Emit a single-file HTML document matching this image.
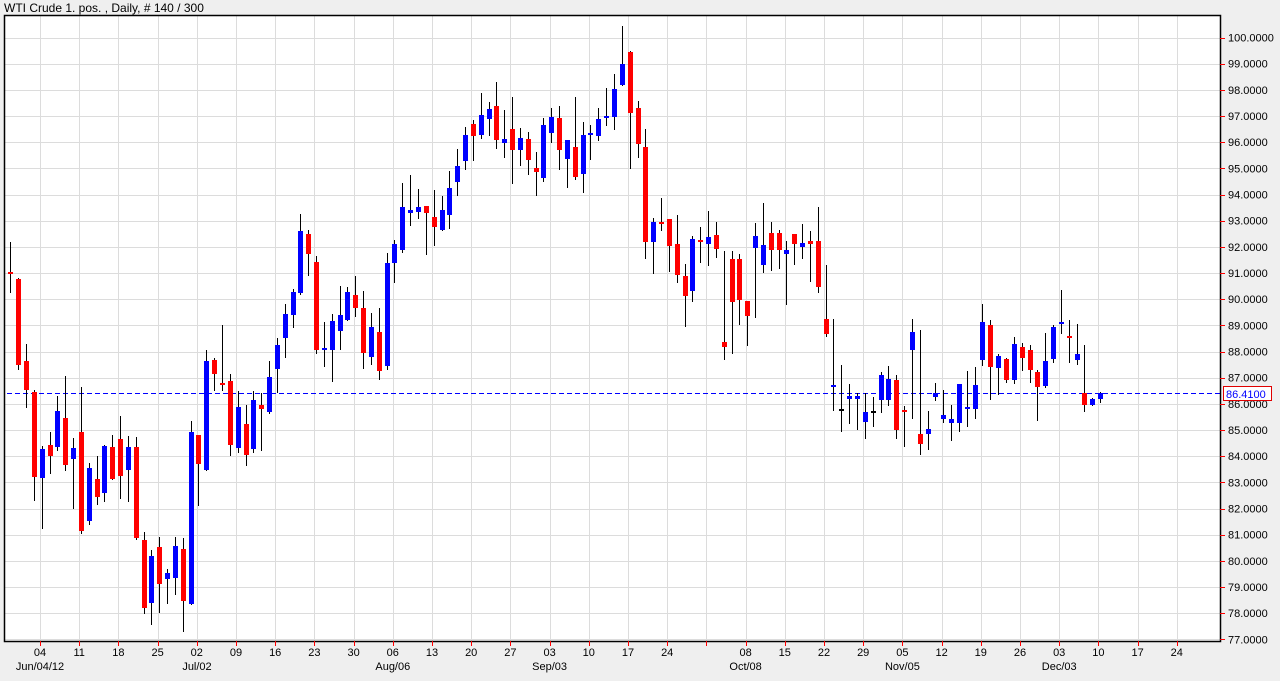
<!DOCTYPE html>
<html><head><meta charset="utf-8"><style>
html,body{margin:0;padding:0;background:#efefef;width:1280px;height:681px;overflow:hidden}
svg{display:block;font-family:"Liberation Sans",sans-serif}
</style></head><body>
<svg id="s" width="1280" height="681" xmlns="http://www.w3.org/2000/svg">
<rect x="0" y="0" width="1280" height="681" fill="#efefef"/>
<text x="4" y="12" font-size="12" fill="#000">WTI Crude 1. pos. , Daily, # 140 / 300</text>
<rect x="4.5" y="15.5" width="1216" height="626" fill="#fff" stroke="none"/>
<g id="grid" stroke="#dcdcdc" stroke-width="1"></g>
<line x1="7" y1="393.5" x2="1220" y2="393.5" stroke="#0000ff" stroke-width="1" stroke-dasharray="5,3"/>
<g id="c"></g>
<path d="M4.5 15.5 H1220.5 V641.5 H4.5 Z" fill="none" stroke="#000" stroke-width="1.5"/>
<g id="ticks" stroke="#f00" stroke-width="1"></g>
<g font-size="11" fill="#000">
<text x="1228" y="41.5">100.0000</text>
<text x="1228" y="67.7">99.0000</text>
<text x="1228" y="93.8">98.0000</text>
<text x="1228" y="120">97.0000</text>
<text x="1228" y="146.2">96.0000</text>
<text x="1228" y="172.4">95.0000</text>
<text x="1228" y="198.5">94.0000</text>
<text x="1228" y="224.7">93.0000</text>
<text x="1228" y="250.9">92.0000</text>
<text x="1228" y="277">91.0000</text>
<text x="1228" y="303.2">90.0000</text>
<text x="1228" y="329.4">89.0000</text>
<text x="1228" y="355.5">88.0000</text>
<text x="1228" y="381.7">87.0000</text>
<text x="1228" y="407.9">86.0000</text>
<text x="1228" y="434.1">85.0000</text>
<text x="1228" y="460.2">84.0000</text>
<text x="1228" y="486.4">83.0000</text>
<text x="1228" y="512.6">82.0000</text>
<text x="1228" y="538.7">81.0000</text>
<text x="1228" y="564.9">80.0000</text>
<text x="1228" y="591.1">79.0000</text>
<text x="1228" y="617.2">78.0000</text>
<text x="1228" y="643.4">77.0000</text>
</g>
<rect x="1223.5" y="386.5" width="48" height="14" fill="#fff" stroke="#e00000"/>
<text x="1226" y="398" font-size="11" fill="#0000ff">86.4100</text>
<g font-size="11" fill="#000" text-anchor="middle">
<text x="40" y="656">04</text><text x="79.2" y="656">11</text><text x="118.4" y="656">18</text><text x="157.6" y="656">25</text>
<text x="196.8" y="656">02</text><text x="236" y="656">09</text><text x="275.2" y="656">16</text><text x="314.4" y="656">23</text>
<text x="353.6" y="656">30</text><text x="392.8" y="656">06</text><text x="432" y="656">13</text><text x="471.2" y="656">20</text>
<text x="510.4" y="656">27</text><text x="549.6" y="656">03</text><text x="588.8" y="656">10</text><text x="628" y="656">17</text>
<text x="667.2" y="656">24</text><text x="745.6" y="656">08</text><text x="784.8" y="656">15</text><text x="824" y="656">22</text>
<text x="863.2" y="656">29</text><text x="902.4" y="656">05</text><text x="941.6" y="656">12</text><text x="980.8" y="656">19</text>
<text x="1020" y="656">26</text><text x="1059.2" y="656">03</text><text x="1098.4" y="656">10</text><text x="1137.6" y="656">17</text>
<text x="1176.8" y="656">24</text>
<text x="40" y="670">Jun/04/12</text><text x="197" y="670">Jul/02</text><text x="392.8" y="670">Aug/06</text>
<text x="549.6" y="670">Sep/03</text><text x="745.6" y="670">Oct/08</text><text x="902.4" y="670">Nov/05</text>
<text x="1059.2" y="670">Dec/03</text>
</g>
</svg>
<script>
var NS="http://www.w3.org/2000/svg";
function el(p,n,a){var e=document.createElementNS(NS,n);for(var k in a)e.setAttribute(k,a[k]);p.appendChild(e);return e;}
var g=document.getElementById('grid'),t=document.getElementById('ticks');
for(var k=0;k<24;k++){var y=Math.round(37.5+26.17*k)+0.5;el(g,'line',{x1:5,x2:1220,y1:y,y2:y});el(t,'line',{x1:1220,x2:1225,y1:y,y2:y});}
for(var k=0;k<30;k++){var x=Math.round(40+39.2*k)+0.5;el(g,'line',{x1:x,x2:x,y1:16,y2:641});el(t,'line',{x1:x,x2:x,y1:641,y2:646});}
var D=[
[242,272,274,293,'r'],[278,279,365,370,'r'],[344,361,390,408,'r'],[390,392,477,501,'r'],[446,449,478,529,'b'],
[432,445,456,474,'r'],[396,411,447,451,'b'],[376,418,465,471,'r'],[438,448,459,509,'b'],[387,432,531,534,'r'],
[463,468,521,525,'b'],[456,479,497,505,'r'],[445,446,493,502,'b'],[435,447,479,480,'r'],[416,439,476,499,'r'],
[436,447,470,502,'b'],[437,447,538,540,'r'],[532,540,608,614,'r'],[550,556,603,625,'b'],[537,547,584,613,'r'],
[569,573,579,604,'b'],[537,546,578,595,'b'],[538,549,601,632,'r'],[421,432,604,605,'b'],[435,435,464,506,'r'],
[350,361,470,471,'b'],[358,360,374,391,'r'],[325,383,385,391,'r'],[374,381,445,456,'r'],[391,407,448,453,'b'],
[405,424,455,466,'r'],[391,400,449,453,'b'],[393,405,409,451,'r'],[361,377,412,414,'b'],[338,345,369,393,'b'],
[304,314,338,358,'b'],[289,292,315,328,'b'],[214,231,293,295,'b'],[230,234,254,276,'r'],[256,262,350,354,'r'],
[322,348,350,367,'b'],[314,321,350,382,'b'],[286,315,331,350,'b'],[287,292,320,321,'b'],[276,295,308,317,'r'],
[291,308,353,369,'r'],[313,327,357,365,'b'],[308,332,371,380,'r'],[253,263,366,370,'b'],[240,244,263,283,'b'],
[183,207,250,253,'b'],[175,210,213,226,'b'],[189,207,212,219,'b'],[206,206,213,255,'r'],[190,217,227,246,'r'],
[196,210,230,231,'b'],[171,188,215,229,'b'],[149,166,182,196,'b'],[127,135,161,170,'b'],[120,124,136,161,'r'],
[93,115,135,139,'b'],[102,109,119,136,'b'],[82,106,140,149,'r'],[110,139,143,158,'b'],[97,129,150,184,'r'],
[128,138,150,166,'b'],[132,139,160,175,'r'],[152,168,172,196,'r'],[118,125,178,182,'b'],[108,117,133,143,'b'],
[106,118,150,170,'r'],[140,140,159,188,'b'],[97,147,177,180,'r'],[122,135,174,193,'b'],[125,133,135,160,'b'],
[108,119,136,141,'b'],[88,116,118,126,'b'],[74,89,117,130,'b'],[26,64,85,86,'b'],[51,52,113,169,'r'],
[101,108,144,158,'r'],[129,147,242,259,'r'],[218,222,242,274,'b'],[198,222,224,231,'r'],[219,219,246,272,'r'],
[215,244,275,283,'r'],[264,276,296,327,'r'],[236,239,291,302,'b'],[227,240,242,263,'r'],[211,237,244,266,'b'],
[222,235,249,258,'r'],[251,342,347,360,'r'],[251,259,302,354,'r'],[254,259,300,325,'r'],[301,301,316,346,'r'],
[223,236,248,318,'b'],[203,245,265,273,'b'],[222,233,250,271,'r'],[230,233,250,269,'r'],[241,250,254,305,'b'],
[234,234,244,265,'r'],[224,243,247,259,'b'],[231,241,244,282,'r'],[207,241,287,293,'r'],[265,319,334,337,'r'],
[319,385,387,411,'b'],[365,409,411,432,'k'],[384,396,399,424,'b'],[393,396,399,430,'b'],[393,412,422,439,'b'],
[397,411,413,427,'k'],[372,375,400,413,'b'],[366,379,400,406,'b'],[375,380,430,439,'r'],[406,410,412,447,'r'],
[319,332,350,419,'b'],[330,434,444,455,'r'],[411,429,434,450,'b'],[383,393,397,401,'b'],[390,415,419,423,'b'],
[405,419,423,441,'b'],[384,384,423,432,'b'],[371,407,409,427,'b'],[367,385,409,419,'b'],[304,322,360,366,'b'],
[320,325,367,400,'r'],[354,356,368,395,'b'],[358,359,380,383,'r'],[337,344,380,384,'b'],[343,347,358,371,'r'],
[345,350,370,383,'r'],[370,372,387,421,'r'],[333,361,386,388,'b'],[325,327,359,363,'b'],[290,322,324,334,'b'],
[320,336,338,363,'r'],[324,354,360,365,'b'],[345,393,405,412,'r'],[398,399,405,406,'b'],[392,393,399,403,'b']
];
var c=document.getElementById('c');
var col={r:'#ff0000',b:'#0000ff',k:'#000000'};
D.forEach(function(d,i){
 var x=Math.round(10.3+7.84*i);
 el(c,'rect',{x:x,y:d[0],width:1,height:d[3]-d[0],fill:'#000'});
 var h=Math.max(d[2]-d[1],1);
 el(c,'rect',{x:x-2,y:d[1],width:5,height:h,fill:col[d[4]]});
});
</script>
</body></html>
